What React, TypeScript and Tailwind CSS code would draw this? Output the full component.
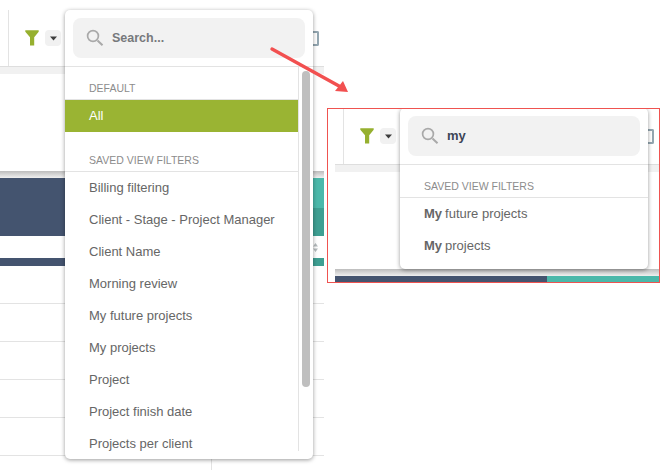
const font = "font-['Liberation_Sans',Arial,sans-serif]";

function Funnel() {
  return (
    <svg width="14" height="16" viewBox="0 0 14 16" className="shrink-0">
      <path d="M0.3 0.3H13.7V1.8L9.2 7.2V15.5H5V7.2L0.3 1.8Z" fill="#96b02f" />
    </svg>
  );
}

function Caret() {
  return (
    <div className="flex h-4 w-4 items-center justify-center rounded-[4px] bg-[#f1f1f1]">
      <svg width="7" height="5" viewBox="0 0 7 5">
        <path d="M0 0.5H7L3.5 4.5Z" fill="#3c3c3c" />
      </svg>
    </div>
  );
}

function SearchIcon() {
  return (
    <svg width="18" height="18" viewBox="0 0 18 18" fill="none" className="shrink-0">
      <circle cx="7" cy="7" r="5.4" stroke="#a9a9a9" strokeWidth="1.7" />
      <path d="M11.5 11.5L16.5 16.2" stroke="#a9a9a9" strokeWidth="2" />
    </svg>
  );
}

function Tools() {
  return (
    <div className="flex items-center gap-[6px]">
      <Funnel />
      <Caret />
    </div>
  );
}

function SearchBox({ value }: { value?: string }) {
  return (
    <div className="border-b border-[#e3e3e3] p-2">
      <div className="flex h-10 items-center gap-[8px] rounded-lg bg-[#f2f2f2] pl-[13px]">
        <SearchIcon />
        {value ? (
          <span className="text-[13px] font-bold text-[#3d4556]">{value}</span>
        ) : (
          <span className="text-[12.5px] font-bold text-[#77797c]">Search...</span>
        )}
      </div>
    </div>
  );
}

function Heading({ children }: { children: string }) {
  return (
    <div className="border-b border-[#e3e3e3] pb-[5px] pl-6 text-[10.5px] leading-[12px] text-[#8c8c8c]">
      {children}
    </div>
  );
}

function Item({ children }: { children: React.ReactNode }) {
  return <div className="flex h-8 items-center pl-6 text-[13px] text-[#666666]">{children}</div>;
}

const items = [
  "Billing filtering",
  "Client - Stage - Project Manager",
  "Client Name",
  "Morning review",
  "My future projects",
  "My projects",
  "Project",
  "Project finish date",
  "Projects per client",
];

function FullMenu() {
  return (
    <div className="absolute left-[65px] top-[10px] flex h-[449px] w-[248px] flex-col rounded-[5px] bg-white shadow-[0_1px_4px_rgba(0,0,0,0.4)]">
      <SearchBox />
      <div className="flex h-[384px] min-h-0">
        <div className="h-full min-w-0 flex-1 overflow-hidden border-r border-[#e3e3e3] pt-[15px]">
          <Heading>DEFAULT</Heading>
          <div className="flex h-8 items-center bg-[#9ab433] pl-6 text-[13px] text-white">All</div>
          <div className="h-[22px]" />
          <Heading>SAVED VIEW FILTERS</Heading>
          {items.map((t) => (
            <Item key={t}>{t}</Item>
          ))}
        </div>
        <div className="w-[14px] shrink-0 pl-[3px] pt-[4px]">
          <div className="h-[316px] w-2 rounded-[4px] bg-[#bfbfbf]" />
        </div>
      </div>
    </div>
  );
}

function LeftShot() {
  return (
    <div className="relative h-[470px] w-[324px] shrink-0 overflow-hidden">
      <div className="ml-[8px] mt-[10px] flex h-[56px] items-center justify-between border-l border-[#e3e3e3] pl-[16px] pr-[5px]">
        <Tools />
        <div className="h-[15px] w-[6px] rounded-r-[2px] border-y-2 border-r-2 border-[#93a6b0]" />
      </div>
      <div className="h-[8px] border-t border-[#dedede] bg-[#f1f1f1]" />
      <div className="h-[97px]" />
      <div className="h-[7px] bg-gradient-to-b from-[#bdbdbd] to-[#f0f0f0]" />
      <div className="flex h-[58px]">
        <div className="w-[211px] bg-[#44546f]" />
        <div className="flex flex-1 flex-col">
          <div className="h-[30px] bg-[#4bb8aa]" />
          <div className="flex-1 bg-[#3f9f92]" />
        </div>
      </div>
      <div className="flex h-[22px] items-center justify-end pr-[6px]">
        <svg width="5" height="9" viewBox="0 0 5 9">
          <path d="M2.5 0L5 3.5H0ZM2.5 9L0 5.5H5Z" fill="#b5bbbd" />
        </svg>
      </div>
      <div className="flex h-[8px]">
        <div className="w-[211px] bg-[#44546f]" />
        <div className="flex-1 bg-[#3f9f92]" />
      </div>
      {[0, 1, 2, 3, 4].map((r) => (
        <div key={r} className="flex h-[38px] border-b border-[#e3e3e3]">
          <div className="w-[212px] border-r border-[#e3e3e3]" />
        </div>
      ))}
      <div className="h-[15px] w-[212px] border-r border-[#e3e3e3]" />
      <FullMenu />
    </div>
  );
}

function RightShot() {
  return (
    <div className="relative ml-[3px] mt-[108px] h-[175px] w-[333px] shrink-0 overflow-hidden border border-[#ef5350] pl-[7px]">
      <div className="ml-[8px] flex h-[55px] items-center justify-between border-l border-[#e3e3e3] pl-[16px] pr-[5px]">
        <div className="mt-[-1px]">
          <Tools />
        </div>
        <div className="h-[15px] w-[6px] rounded-r-[2px] border-y-2 border-r-2 border-[#93a6b0]" />
      </div>
      <div className="h-[8px] border-t border-[#dedede] bg-[#f1f1f1]" />
      <div className="h-[97px]" />
      <div className="h-[7px] bg-gradient-to-b from-[#bdbdbd] to-[#f0f0f0]" />
      <div className="flex h-[6px]">
        <div className="w-[212px] bg-[#44546f]" />
        <div className="flex-1 bg-[#4bb8aa]" />
      </div>
      <div className="absolute left-[72px] top-[-1px] w-[248px] rounded-[5px] bg-white pb-[7px] shadow-[0_1px_4px_rgba(0,0,0,0.4)]">
        <SearchBox value="my" />
        <div className="pt-[15px]">
          <Heading>SAVED VIEW FILTERS</Heading>
          <Item>
            <b className="mr-[3px]">My</b> future projects
          </Item>
          <Item>
            <b className="mr-[3px]">My</b> projects
          </Item>
        </div>
      </div>
    </div>
  );
}

export default function App() {
  return (
    <div className={`relative flex h-[470px] w-[660px] overflow-hidden bg-white ${font}`}>
      <LeftShot />
      <RightShot />
      <svg width="90" height="56" viewBox="0 0 90 56" className="absolute left-[265px] top-[43px]">
        <path d="M7 6L74 43" stroke="#f25050" strokeWidth="3.4" strokeLinecap="round" />
        <path d="M83 49L70 48L78 38Z" fill="#f25050" />
      </svg>
    </div>
  );
}
